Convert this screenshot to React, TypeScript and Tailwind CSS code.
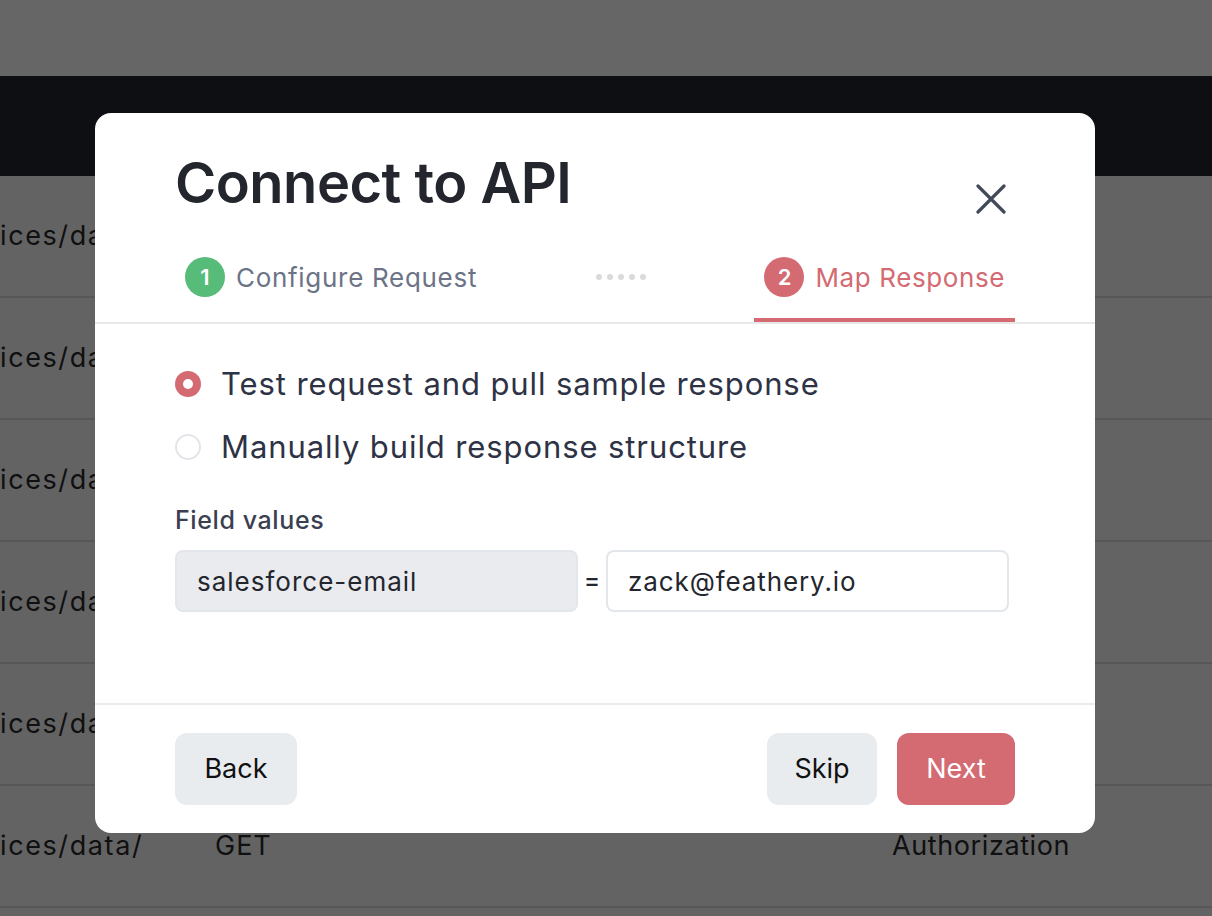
import * as React from "react";

const rows = [0, 1, 2, 3, 4, 5];

const Radio: React.FC<{ checked?: boolean; label: string }> = ({ checked, label }) => (
  <label className="flex items-center gap-5 h-10">
    {checked ? (
      <span className="w-[26px] h-[26px] rounded-full bg-[#d46a72] flex items-center justify-center">
        <span className="w-[10px] h-[10px] rounded-full bg-white" />
      </span>
    ) : (
      <span className="w-[26px] h-[26px] rounded-full border-2 border-[#e2e5e9] bg-white" />
    )}
    <span className="text-[31px] text-[#2e3245] tracking-[0.9px]">{label}</span>
  </label>
);

export default function App() {
  return (
    <div className="relative w-full h-[916px] overflow-hidden bg-[#f7f8fa] font-['Inter',sans-serif]">
      {/* page beneath the dialog */}
      <div className="h-[76px] bg-white" />
      <div className="h-[100px] bg-[#23262d]" />
      <div>
        {rows.map((r) => (
          <div
            key={r}
            className="h-[122px] border-b-2 border-[#dadada] bg-[#f7f8fa] flex items-center text-[27px] text-[#2a2a2a]"
          >
            <span className="w-[215px] tracking-[1.6px]">ices/data/</span>
            {r === 5 && (
              <>
                <span className="w-[677px] tracking-[1px]">GET</span>
                <span className="tracking-[0.6px]">Authorization</span>
              </>
            )}
          </div>
        ))}
      </div>

      {/* overlay */}
      <div className="absolute inset-0 bg-black/60">
        <div className="ml-[95px] mt-[113px] w-[1000px] h-[720px] bg-white rounded-2xl flex flex-col">
          <div className="px-20 pt-[42px]">
            <div className="h-[56px] flex items-start justify-between">
              <h1 className="text-[56px] leading-[56px] font-semibold text-[#23262d] tracking-[-0.5px]">
                Connect to API
              </h1>
              <button className="mt-[29px] mr-[9px] w-[30px] h-[30px] shrink-0" aria-label="Close">
                <svg viewBox="0 0 30 30" className="w-[30px] h-[30px]" fill="none" stroke="#424959" strokeWidth="3.2" strokeLinecap="round">
                  <path d="M2 2 L28 28 M28 2 L2 28" />
                </svg>
              </button>
            </div>
          </div>

          <div className="mt-[46px] px-20 flex items-end justify-between">
            <div className="flex items-center gap-[11px] px-[10px] pb-[21px] border-b-4 border-transparent">
              <span className="w-10 h-10 rounded-full bg-[#57bb7a] text-white text-[22px] font-semibold flex items-center justify-center">
                1
              </span>
              <span className="text-[26px] tracking-[0.7px] text-[#6c7386]">Configure Request</span>
            </div>
            <div className="flex gap-[5px] pb-[42px]">
              <span className="w-[6px] h-[6px] rounded-full bg-[#dadada]" />
              <span className="w-[6px] h-[6px] rounded-full bg-[#dadada]" />
              <span className="w-[6px] h-[6px] rounded-full bg-[#dadada]" />
              <span className="w-[6px] h-[6px] rounded-full bg-[#dadada]" />
              <span className="w-[6px] h-[6px] rounded-full bg-[#dadada]" />
            </div>
            <div className="flex items-center gap-[11px] px-[10px] pb-[21px] border-b-4 border-[#d46a72]">
              <span className="w-10 h-10 rounded-full bg-[#d46a72] text-white text-[22px] font-semibold flex items-center justify-center">
                2
              </span>
              <span className="text-[26px] tracking-[0.6px] text-[#d46a72]">Map Response</span>
            </div>
          </div>
          <div className="h-[2px] bg-[#e8e8e8]" />

          <div className="flex-1 px-20 pt-[40px]">
            <div className="flex flex-col gap-[23px]">
              <Radio checked label="Test request and pull sample response" />
              <Radio label="Manually build response structure" />
            </div>
            <div className="mt-[38px] text-[25px] leading-[30px] tracking-[0.6px] font-medium text-[#3b4051]">
              Field values
            </div>
            <div className="mt-[15px] flex items-center">
              <div className="w-[403px] h-[62px] rounded-lg border-2 border-[#e3e6ea] bg-[#e9ebef] pl-[20px] flex items-center text-[26px] tracking-[1px] text-[#23262d]">
                salesforce-email
              </div>
              <span className="w-[28px] text-center text-[24px] font-medium text-[#23262d]">=</span>
              <div className="w-[403px] h-[62px] rounded-lg border-2 border-[#e3e6ea] bg-white pl-[20px] flex items-center text-[26px] tracking-[0.9px] text-[#23262d]">
                zack@feathery.io
              </div>
            </div>
          </div>

          <div className="border-t-2 border-[#ebebeb] px-20 py-[28px] flex items-center justify-between">
            <button className="h-[72px] w-[122px] rounded-xl bg-[#e9ecef] text-[27px] text-[#111]">Back</button>
            <div className="flex gap-5">
              <button className="h-[72px] w-[110px] rounded-xl bg-[#e9ecef] text-[27px] text-[#111]">Skip</button>
              <button className="h-[72px] w-[118px] rounded-xl bg-[#d46a72] text-[27px] text-white">Next</button>
            </div>
          </div>
        </div>
      </div>
    </div>
  );
}
